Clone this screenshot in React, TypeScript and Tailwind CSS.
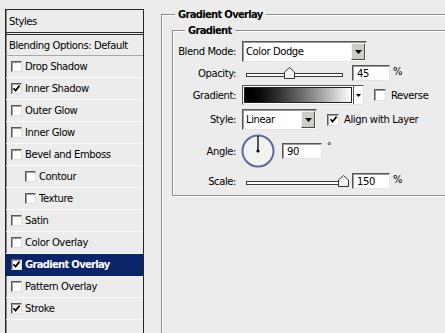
import React from "react";

type Item = { label: string; checked?: boolean; indent?: boolean; selected?: boolean };

const items: Item[] = [
  { label: "Drop Shadow" },
  { label: "Inner Shadow", checked: true },
  { label: "Outer Glow" },
  { label: "Inner Glow" },
  { label: "Bevel and Emboss" },
  { label: "Contour", indent: true },
  { label: "Texture", indent: true },
  { label: "Satin" },
  { label: "Color Overlay" },
  { label: "Gradient Overlay", checked: true, selected: true },
  { label: "Pattern Overlay" },
  { label: "Stroke", checked: true },
];

function CheckBox({ checked, big }: { checked?: boolean; big?: boolean }) {
  return (
    <span
      className={`flex shrink-0 items-center justify-center border border-t-[#5b5b5b] border-l-[#5b5b5b] border-r-[#dcdcdc] border-b-[#dcdcdc] bg-white shadow-[inset_1px_1px_0_#a0a0a0] ${
        big ? "h-[12px] w-[12px]" : "h-[11px] w-[11px]"
      }`}
    >
      {checked && (
        <svg width="9" height="9" viewBox="0 0 9 9">
          <path d="M1.5 4.2 L3.6 6.6 L7.6 1.6" fill="none" stroke="#000" strokeWidth="1.7" />
        </svg>
      )}
    </span>
  );
}

function ArrowButton() {
  return (
    <span className="m-[1px] flex h-[17px] w-[14px] shrink-0 items-center justify-center border border-t-[#f4f4f4] border-l-[#f4f4f4] border-r-[#4a4a4a] border-b-[#4a4a4a] bg-[#cfccc6]">
      <svg width="7" height="4" viewBox="0 0 7 4">
        <path d="M0 0 H7 L3.5 4 Z" fill="#000" />
      </svg>
    </span>
  );
}

function Select({ value, width }: { value: string; width: string }) {
  return (
    <div
      className={`flex h-[21px] items-center border border-t-[#555] border-l-[#555] border-r-[#e4e4e4] border-b-[#e4e4e4] bg-white shadow-[inset_1px_1px_0_#9c9c9c] ${width}`}
    >
      <span className="flex-1 pl-[3px]">{value}</span>
      <ArrowButton />
    </div>
  );
}

function Field({ value, width }: { value: string; width: string }) {
  return (
    <div
      className={`flex h-[16px] items-center border border-t-[#555] border-l-[#555] border-r-[#e4e4e4] border-b-[#e4e4e4] bg-white pl-[4px] shadow-[inset_1px_1px_0_#9c9c9c] ${width}`}
    >
      {value}
    </div>
  );
}

function Slider({ thumb }: { thumb: string }) {
  return (
    <div className="relative ml-[4px] flex h-[16px] w-[97px] items-center">
      <div className="mt-[4px] h-[4px] w-full border border-[#3a3a3a] bg-white" />
      <svg className={`absolute top-[2px] ${thumb}`} width="11" height="12" viewBox="0 0 11 12">
        <path d="M0.5 5 L5.5 0.5 L10.5 5 V11.5 H0.5 Z" fill="#f4f4f4" stroke="#333" />
      </svg>
    </div>
  );
}

function Label({ children }: { children: React.ReactNode }) {
  return <span className="w-[63px] shrink-0 text-right">{children}</span>;
}

export default function App() {
  return (
    <div className="flex h-[333px] w-[445px] overflow-hidden bg-[#ececec] font-['DejaVu_Sans',Verdana,sans-serif] text-[10px] leading-[13px] tracking-[-0.4px] text-black">
      {/* styles list */}
      <div className="ml-[5px] mt-[9px] flex h-[340px] w-[139px] shrink-0 flex-col border border-[#262626] bg-[#ececec] shadow-[inset_1px_0_0_#8a8a8a]">
        <div className="flex h-[25px] items-center border-b-[3px] border-double border-[#2a2a2a] pl-[3px]">Styles</div>
        <div className="flex h-[21px] items-center border-b border-[#a8a8a8] pl-[3px]">Blending Options: Default</div>
        {items.map((it) => (
          <div
            key={it.label}
            className={`flex h-[22px] items-center border-b ${
              it.selected ? "border-[#0a246a] bg-[#0a246a] font-bold tracking-[-0.7px] text-white" : "border-[#fbfbfb]"
            } ${it.indent ? "pl-[19px]" : "pl-[5px]"}`}
          >
            <CheckBox checked={it.checked} />
            <span className="ml-[3px]">{it.label}</span>
          </div>
        ))}
      </div>

      {/* settings */}
      <div className="pl-[17px] pt-[8px]">
        <fieldset className="h-[340px] w-[300px] border border-[#8c8c8c] shadow-[inset_1px_1px_0_#fff]">
          <legend className="ml-[13px] bg-[#ececec] px-[3px] font-bold tracking-[-0.7px]">Gradient Overlay</legend>
          <fieldset className="ml-[10px] mt-[3px] w-[300px] border border-[#8c8c8c] pb-[6px] shadow-[inset_1px_1px_0_#fff,1px_1px_0_#fff]">
            <legend className="ml-[12px] bg-[#ececec] px-[3px] font-bold tracking-[-0.7px]">Gradient</legend>

            <div className="mt-[4px] flex h-[21px] items-center">
              <Label>Blend Mode:</Label>
              <div className="ml-[6px]">
                <Select value="Color Dodge" width="w-[125px]" />
              </div>
            </div>

            <div className="mt-[3px] flex h-[16px] items-center">
              <Label>Opacity:</Label>
              <div className="ml-[6px] flex items-center">
                <Slider thumb="left-[38px]" />
                <div className="ml-[9px]">
                  <Field value="45" width="w-[38px]" />
                </div>
                <span className="ml-[3px] self-start">%</span>
              </div>
            </div>

            <div className="mt-[4px] flex h-[20px] items-center">
              <Label>Gradient:</Label>
              <div className="ml-[6px] flex items-center">
                <div className="flex h-[20px] w-[122px] border border-t-[#555] border-l-[#555] border-r-[#e4e4e4] border-b-[#e4e4e4] bg-white">
                  <div className="m-[1px] flex-1 border border-[#222] bg-gradient-to-r from-black to-white" />
                  <div className="flex w-[10px] items-center justify-center border-l border-[#555] bg-white">
                    <svg width="5" height="3" viewBox="0 0 5 3">
                      <path d="M0 0 H5 L2.5 3 Z" fill="#000" />
                    </svg>
                  </div>
                </div>
                <div className="ml-[10px]">
                  <CheckBox big />
                </div>
                <span className="ml-[5px]">Reverse</span>
              </div>
            </div>

            <div className="mt-[4px] flex h-[21px] items-center">
              <Label>Style:</Label>
              <div className="ml-[6px] flex items-center">
                <Select value="Linear" width="w-[75px]" />
                <div className="ml-[10px]">
                  <CheckBox checked big />
                </div>
                <span className="ml-[5px]">Align with Layer</span>
              </div>
            </div>

            <div className="mt-[4px] flex h-[34px] items-center">
              <Label>Angle:</Label>
              <div className="ml-[5px] flex items-center">
                <svg width="34" height="34" viewBox="0 0 34 34">
                  <circle cx="17" cy="17" r="15.5" fill="#f2f2ee" stroke="#5d6a99" strokeWidth="2" />
                  <line x1="17" y1="17" x2="17" y2="2" stroke="#000" strokeWidth="1.3" />
                  <circle cx="17" cy="17" r="1.6" fill="#000" />
                </svg>
                <div className="ml-[7px]">
                  <Field value="90" width="w-[40px]" />
                </div>
                <span className="mb-[10px] ml-[5px] text-[9px]">°</span>
              </div>
            </div>

            <div className="mt-[5px] flex h-[16px] items-center">
              <Label>Scale:</Label>
              <div className="ml-[6px] flex items-center">
                <Slider thumb="left-[92px]" />
                <div className="ml-[9px]">
                  <Field value="150" width="w-[38px]" />
                </div>
                <span className="ml-[3px] self-start">%</span>
              </div>
            </div>
          </fieldset>
        </fieldset>
      </div>
    </div>
  );
}
